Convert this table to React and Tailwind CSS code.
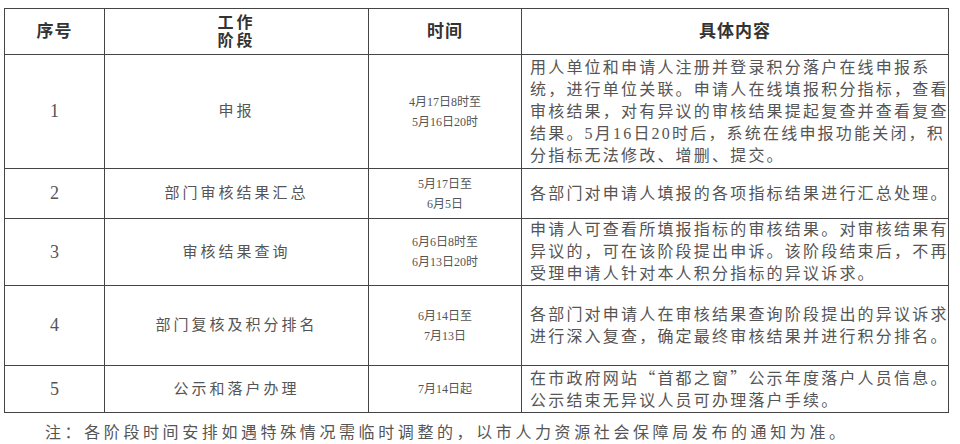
const rows = [
  {
    no: '1',
    stage: '申报',
    h: 'h-[114px]',
    time: ['4月17日8时至', '5月16日20时'],
    content: [
      '用人单位和申请人注册并登录积分落户在线申报系',
      '统，进行单位关联。申请人在线填报积分指标，查看',
      '审核结果，对有异议的审核结果提起复查并查看复查',
      '结果。5月16日20时后，系统在线申报功能关闭，积',
      '分指标无法修改、增删、提交。',
    ],
  },
  {
    no: '2',
    stage: '部门审核结果汇总',
    h: 'h-[50px]',
    time: ['5月17日至', '6月5日'],
    content: ['各部门对申请人填报的各项指标结果进行汇总处理。'],
  },
  {
    no: '3',
    stage: '审核结果查询',
    h: 'h-[67px]',
    time: ['6月6日8时至', '6月13日20时'],
    content: [
      '申请人可查看所填报指标的审核结果。对审核结果有',
      '异议的，可在该阶段提出申诉。该阶段结束后，不再',
      '受理申请人针对本人积分指标的异议诉求。',
    ],
  },
  {
    no: '4',
    stage: '部门复核及积分排名',
    h: 'h-[80px]',
    time: ['6月14日至', '7月13日'],
    content: [
      '各部门对申请人在审核结果查询阶段提出的异议诉求',
      '进行深入复查，确定最终审核结果并进行积分排名。',
    ],
  },
  {
    no: '5',
    stage: '公示和落户办理',
    h: 'h-[46px]',
    time: ['7月14日起'],
    content: [
      <>
        在市政府网站<span className="font-['Noto_Sans_CJK_SC',sans-serif]">“首都之窗”</span>公示年度落户人员信息。
      </>,
      '公示结束无异议人员可办理落户手续。',
    ],
  },
];

export default function App() {
  return (
    <div className="w-[960px] h-[444px] bg-white overflow-hidden font-['Liberation_Serif','Noto_Sans_CJK_SC',serif] text-[#555]">
      <table className="table-fixed border-collapse ml-[4px] mt-[8px] w-[944px]">
        <colgroup>
          <col className="w-[100px]" />
          <col className="w-[264px]" />
          <col className="w-[153px]" />
          <col className="w-[427px]" />
        </colgroup>
        <thead>
          <tr className="h-[46px] text-[#333]">
            <th className="border border-[#444] text-[17px] font-bold tracking-[1px]">序号</th>
            <th className="border border-[#444] text-[16px] font-semibold leading-[18px] tracking-[3px]">
              工作
              <br />
              阶段
            </th>
            <th className="border border-[#444] text-[17px] font-bold tracking-[1px]">时间</th>
            <th className="border border-[#444] text-[17px] font-bold tracking-[1px]">具体内容</th>
          </tr>
        </thead>
        <tbody>
          {rows.map((r) => (
            <tr key={r.no} className={r.h}>
              <td className="border border-[#444] text-center text-[18px]">{r.no}</td>
              <td className="border border-[#444] text-center text-[15px] tracking-[3px]">{r.stage}</td>
              <td className="border border-[#444] text-center text-[12px] leading-[20px]">
                {r.time.map((t) => (
                  <div key={t}>{t}</div>
                ))}
              </td>
              <td className="border border-[#444] pl-[8px] text-[16px] leading-[22px] tracking-[2.2px] whitespace-nowrap">
                {r.content.map((c, i) => (
                  <div key={i}>{c}</div>
                ))}
              </td>
            </tr>
          ))}
        </tbody>
      </table>
      <p className="mt-[9px] pl-[45px] text-[16px] leading-[22px] tracking-[3.6px] whitespace-nowrap">
        注：各阶段时间安排如遇特殊情况需临时调整的，以市人力资源社会保障局发布的通知为准。
      </p>
    </div>
  );
}
